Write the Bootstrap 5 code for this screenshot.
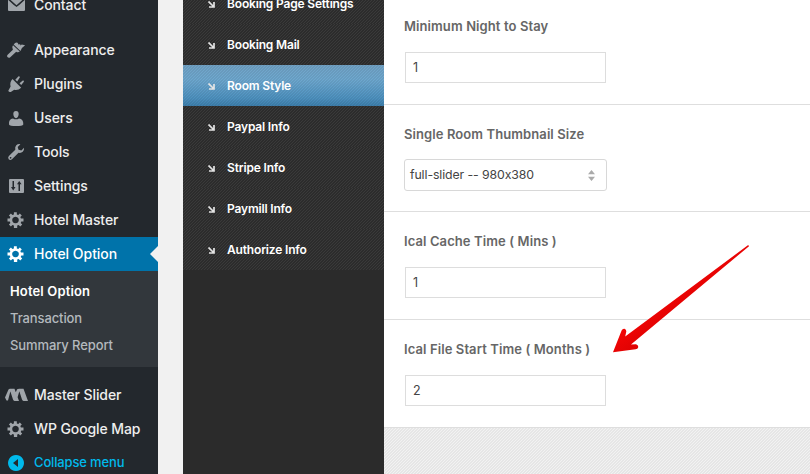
<!DOCTYPE html>
<html lang="en">
<head>
<meta charset="utf-8">
<meta name="viewport" content="width=device-width, initial-scale=1">
<title>Hotel Option</title>
<link href="https://cdn.jsdelivr.net/npm/bootstrap@5.3.0/dist/css/bootstrap.min.css" rel="stylesheet">
<style>
body{font-family:Inter,"Liberation Sans",sans-serif;font-feature-settings:"calt" 0;background:#f1f1f1;height:474px;overflow:hidden}
.side{width:158px;background:#23282d;font-size:14px;font-weight:500;letter-spacing:-.1px}
.side ul:first-child{margin-top:-12px}
.side-link{height:34px;color:#eee;padding:0 0 2px 6px}
.side-link svg{width:20px;height:20px;fill:#a0a5aa;margin:2px 8px 0 0;flex:none}
.side-link.ms svg{width:23px;height:14px;margin:2px 6px 0 -1px}
.side-link.current{background:#0073aa;color:#fff;letter-spacing:-.03px}
.side-link.current svg{fill:#fff}
.side-link.current::after{content:"";position:absolute;right:0;top:9px;border:8px solid transparent;border-right-color:#f1f1f1;border-left-width:0}
.side-link.fold{color:#00b9eb;font-size:13px;letter-spacing:-.15px;padding-bottom:0}
.side-link.fold svg{fill:#00b9eb;margin-top:0}
.gap-row{height:11px}
.sub{background:#32373c;height:96px;padding:7px 0 0 10px;font-size:13px}
.sub a{height:27px;color:#b4b9be}
.sub a.on{color:#fff;font-weight:600;letter-spacing:.15px}
.tabs{width:201px;margin-left:25px;background:#2b2b2b;font-size:12px;font-weight:600;letter-spacing:-.17px}
.tabs ul{margin-top:-17px}
.tab-link{height:41px;color:#fff;padding-left:25px;background:linear-gradient(135deg,#2c2c2c 25%,#3a3a3a 25% 50%,#2c2c2c 50% 75%,#3a3a3a 75%) 0 0/3px 3px}
.tab-link svg{width:7px;height:7px;margin:2px 12px 0 0;fill:none;stroke:#e4e4e4;stroke-width:1.7}
.tab-link.on{background:linear-gradient(135deg,#00000012 25%,transparent 25% 50%,#00000012 50% 75%,transparent 75%) 0 0/3px 3px,linear-gradient(#72a4c7,#6fa9d0 35%,#4f93c1 80%,#3e80ae)}
.panel-rows{background:linear-gradient(135deg,#e6e6e6 25%,#f2f2f2 25% 50%,#e6e6e6 50% 75%,#f2f2f2 75%) 0 0/3px 3px}
.opt{background:#fff;border-bottom:1px solid #dedede;height:108px;padding:19px 0 0 20px}
.opt.first{height:105px;padding-top:16px}
.opt.mid{height:107px}
.opt label{font-size:13px;line-height:20px;font-weight:600;color:#666;display:block;letter-spacing:.08px;word-spacing:.1px}
.opt .form-control{width:201px;height:31px;margin:16px 0 0 1px;border:1px solid #ddd;padding:0 7px;font-size:12.5px;color:#444}
.picker{width:203px;height:32px;margin-top:15px;border:1px solid #d8d8d8;border-radius:3px;padding:0 11px 0 5px;font-size:12.3px;letter-spacing:-.1px;color:#444}
.pointer{left:605px;top:235px}
</style>
</head>
<body>
<svg class="d-none">
<symbol id="gear" viewBox="0 0 20 20"><path fill-rule="evenodd" d="M18 12h-2.200q-.2.800-.6 1.500l1.500 1.500-2 2-1.500-1.500q-.700.400-1.500.6V18.500H8.400v-2.300q-.8-.2-1.500-.6L5.400 17.200l-2-2L4.900 13.600q-.4-.7-.6-1.500H2V9.200h2.300q.2-.8.6-1.500L3.400 6.200l2-2 1.500 1.500q.7-.4 1.500-.6V2.800h2.900v2.300q.8.2 1.500.6l1.500-1.500 2 2-1.500 1.500q.4.700.6 1.500H18zM10 7.300a3.300 3.300 0 1 0 .01 0z" transform="translate(-.5 -.6)"/></symbol>
</svg>
<div class="d-flex h-100 position-relative">
  <nav class="side flex-shrink-0">
    <ul class="list-unstyled mb-0">
      <li><a class="side-link d-flex align-items-center text-decoration-none"><svg viewBox="0 0 20 20"><path d="M3.500 4h14L10.500 10.200zM2 4.700l5.500 5 3 2.300 3-2.300 5.500-5V15q0 1-1 1H3q-1 0-1-1z"/></svg>Contact</a></li>
      <li class="gap-row"></li>
      <li><a class="side-link d-flex align-items-center text-decoration-none"><svg viewBox="0 0 20 20"><path d="M14.500 10.900 7.700 4.500Q9.300 2 11.500 2.700l1.300 2 1.200-.8.600 1.500 1.100-.9 3.400.8q-3.300 2.100-4.600 5.600zM7 5.300l6.800 6.300q-1.900 1.300-3.600.2L4 17.600Q2.400 18.300 1.200 16.800q-.5-1.300.7-2.300l5-4.700Q5.200 7.500 7 5.300z"/></svg>Appearance</a></li>
      <li><a class="side-link d-flex align-items-center text-decoration-none"><svg viewBox="0 0 20 20"><path d="m6.500 5 8.700 8.700q-3 2.800-7 2l-3.400 2.300q-2 .4-2.500-1.200l2.300-4.200Q3.400 8.300 6.500 5zM9.300 5.700l3-3.300q1.300-.6 1.600.9l-2.700 4.200zM13.500 9.200l3.300-2.700q1.300-.3 1.100 1.300l-2.700 3.200z"/></svg>Plugins</a></li>
      <li><a class="side-link d-flex align-items-center text-decoration-none"><svg viewBox="0 0 20 20"><path d="M10 10.200q-2.300-.3-2.700-4.200Q7.300 3 10 3t2.700 3q-.4 3.900-2.700 4.200zM3 16.500Q2.500 11 7 10.500q3 1.700 6 0 4.500.5 4.300 6-.8 1.500-7.200 1.500T3 16.500z"/></svg>Users</a></li>
      <li><a class="side-link d-flex align-items-center text-decoration-none"><svg viewBox="0 0 20 20"><path d="M16.700 9.800q-1.700 1.600-4.200 1L6 17.300q-1.700 1.300-3.300 0-1.200-1.700.2-3.200L9.300 7.800q-.6-2.800 1-4.500Q12 1.700 14.400 2.200l-2.700 2.700.8 2.800 2.900.8L18 5.700q.4 2.400-1.300 4.100zM4.600 16.700q1-.2.9-1.100-.3-.9-1.200-.6-.8.400-.5 1.200.2.400.8.500z" fill-rule="evenodd"/></svg>Tools</a></li>
      <li><a class="side-link d-flex align-items-center text-decoration-none"><svg viewBox="0 0 20 20"><path fill-rule="evenodd" d="M4 3h13q1 0 1 1v12q0 1-1 1H4q-1 0-1-1V4q0-1 1-1zM6.500 5v6H5l2.200 3.400L9.500 11H8V5zM13.200 5 11 8.300h1.500V15H14V8.300h1.600z"/></svg>Settings</a></li>
      <li><a class="side-link d-flex align-items-center text-decoration-none"><svg><use href="#gear"/></svg>Hotel Master</a></li>
      <li><a class="side-link current position-relative d-flex align-items-center text-decoration-none"><svg><use href="#gear"/></svg>Hotel Option</a></li>
    </ul>
    <div class="sub d-flex flex-column">
      <a class="on d-flex align-items-center text-decoration-none">Hotel Option</a>
      <a class="d-flex align-items-center text-decoration-none">Transaction</a>
      <a class="d-flex align-items-center text-decoration-none">Summary Report</a>
    </div>
    <ul class="list-unstyled mb-0">
      <li class="gap-row"></li>
      <li><a class="side-link ms d-flex align-items-center text-decoration-none"><svg viewBox="0 0 23 14"><path d="M0 9.500 3.500 1.500Q4.500.200 6 1L3 12.500H1.500zM4.500.7h5L14 13H9.500Q8.500 12.700 8 11.500zM9.800 6.500 12 1.500Q13 .3 15 1l-2.500 8.500zM13.500.7h5L23 13h-4.500Q17.500 12.700 17 11.500z"/></svg>Master Slider</a></li>
      <li><a class="side-link d-flex align-items-center text-decoration-none"><svg><use href="#gear"/></svg>WP Google Map</a></li>
      <li><a class="side-link fold d-flex align-items-center text-decoration-none"><svg viewBox="0 0 20 20"><path fill-rule="evenodd" d="M10 2a8 8 0 1 0 .01 0zM12 6v8l-5-4z"/></svg>Collapse menu</a></li>
    </ul>
  </nav>
  <nav class="tabs flex-shrink-0">
    <ul class="list-unstyled mb-0">
      <li><a class="tab-link d-flex align-items-center text-decoration-none"><svg viewBox="0 0 7 7"><path d="M.5.500 5.500 5.500M6 1v5H1"/></svg>Booking Page Settings</a></li>
      <li><a class="tab-link d-flex align-items-center text-decoration-none"><svg viewBox="0 0 7 7"><path d="M.5.500 5.500 5.500M6 1v5H1"/></svg>Booking Mail</a></li>
      <li><a class="tab-link on d-flex align-items-center text-decoration-none"><svg viewBox="0 0 7 7"><path d="M.5.500 5.500 5.500M6 1v5H1"/></svg>Room Style</a></li>
      <li><a class="tab-link d-flex align-items-center text-decoration-none"><svg viewBox="0 0 7 7"><path d="M.5.500 5.500 5.500M6 1v5H1"/></svg>Paypal Info</a></li>
      <li><a class="tab-link d-flex align-items-center text-decoration-none"><svg viewBox="0 0 7 7"><path d="M.5.500 5.500 5.500M6 1v5H1"/></svg>Stripe Info</a></li>
      <li><a class="tab-link d-flex align-items-center text-decoration-none"><svg viewBox="0 0 7 7"><path d="M.5.500 5.500 5.500M6 1v5H1"/></svg>Paymill Info</a></li>
      <li><a class="tab-link d-flex align-items-center text-decoration-none"><svg viewBox="0 0 7 7"><path d="M.5.500 5.500 5.500M6 1v5H1"/></svg>Authorize Info</a></li>
    </ul>
  </nav>
  <main class="panel-rows flex-grow-1">
    <div class="opt first"><label for="night">Minimum Night to Stay</label><input id="night" class="form-control rounded-0" value="1"></div>
    <div class="opt mid"><label>Single Room Thumbnail Size</label><div class="picker d-flex align-items-center justify-content-between"><span>full-slider -- 980x380</span><svg width="7" height="11" viewBox="0 0 7 11" fill="#aaa"><path d="M0 4.200 3.500 0 7 4.200zM0 6.800h7L3.500 11z"/></svg></div></div>
    <div class="opt"><label for="cache">Ical Cache Time ( Mins )</label><input id="cache" class="form-control rounded-0" value="1"></div>
    <div class="opt"><label for="start">Ical File Start Time ( Months )</label><input id="start" class="form-control rounded-0" value="2"></div>
  </main>
  <svg class="pointer position-absolute" width="150" height="125" viewBox="605 235 150 125"><defs><linearGradient id="red" x1="0" y1="0" x2="1" y2="1"><stop offset=".4" stop-color="#f60606"/><stop offset=".65" stop-color="#d40000"/></linearGradient></defs><path fill="url(#red)" d="M748.200 245 749 246.200 631 344.500 636 344.300Q638.500 345 638.200 347.200 637.800 349 635.500 349.200L613 352.300 621.600 330.500Q622.500 328.400 624.500 328.700 626.700 329.500 626.200 332L625.200 336.500z"/></svg>
</div>
<script src="https://cdn.jsdelivr.net/npm/bootstrap@5.3.0/dist/js/bootstrap.bundle.min.js"></script>
</body>
</html>
